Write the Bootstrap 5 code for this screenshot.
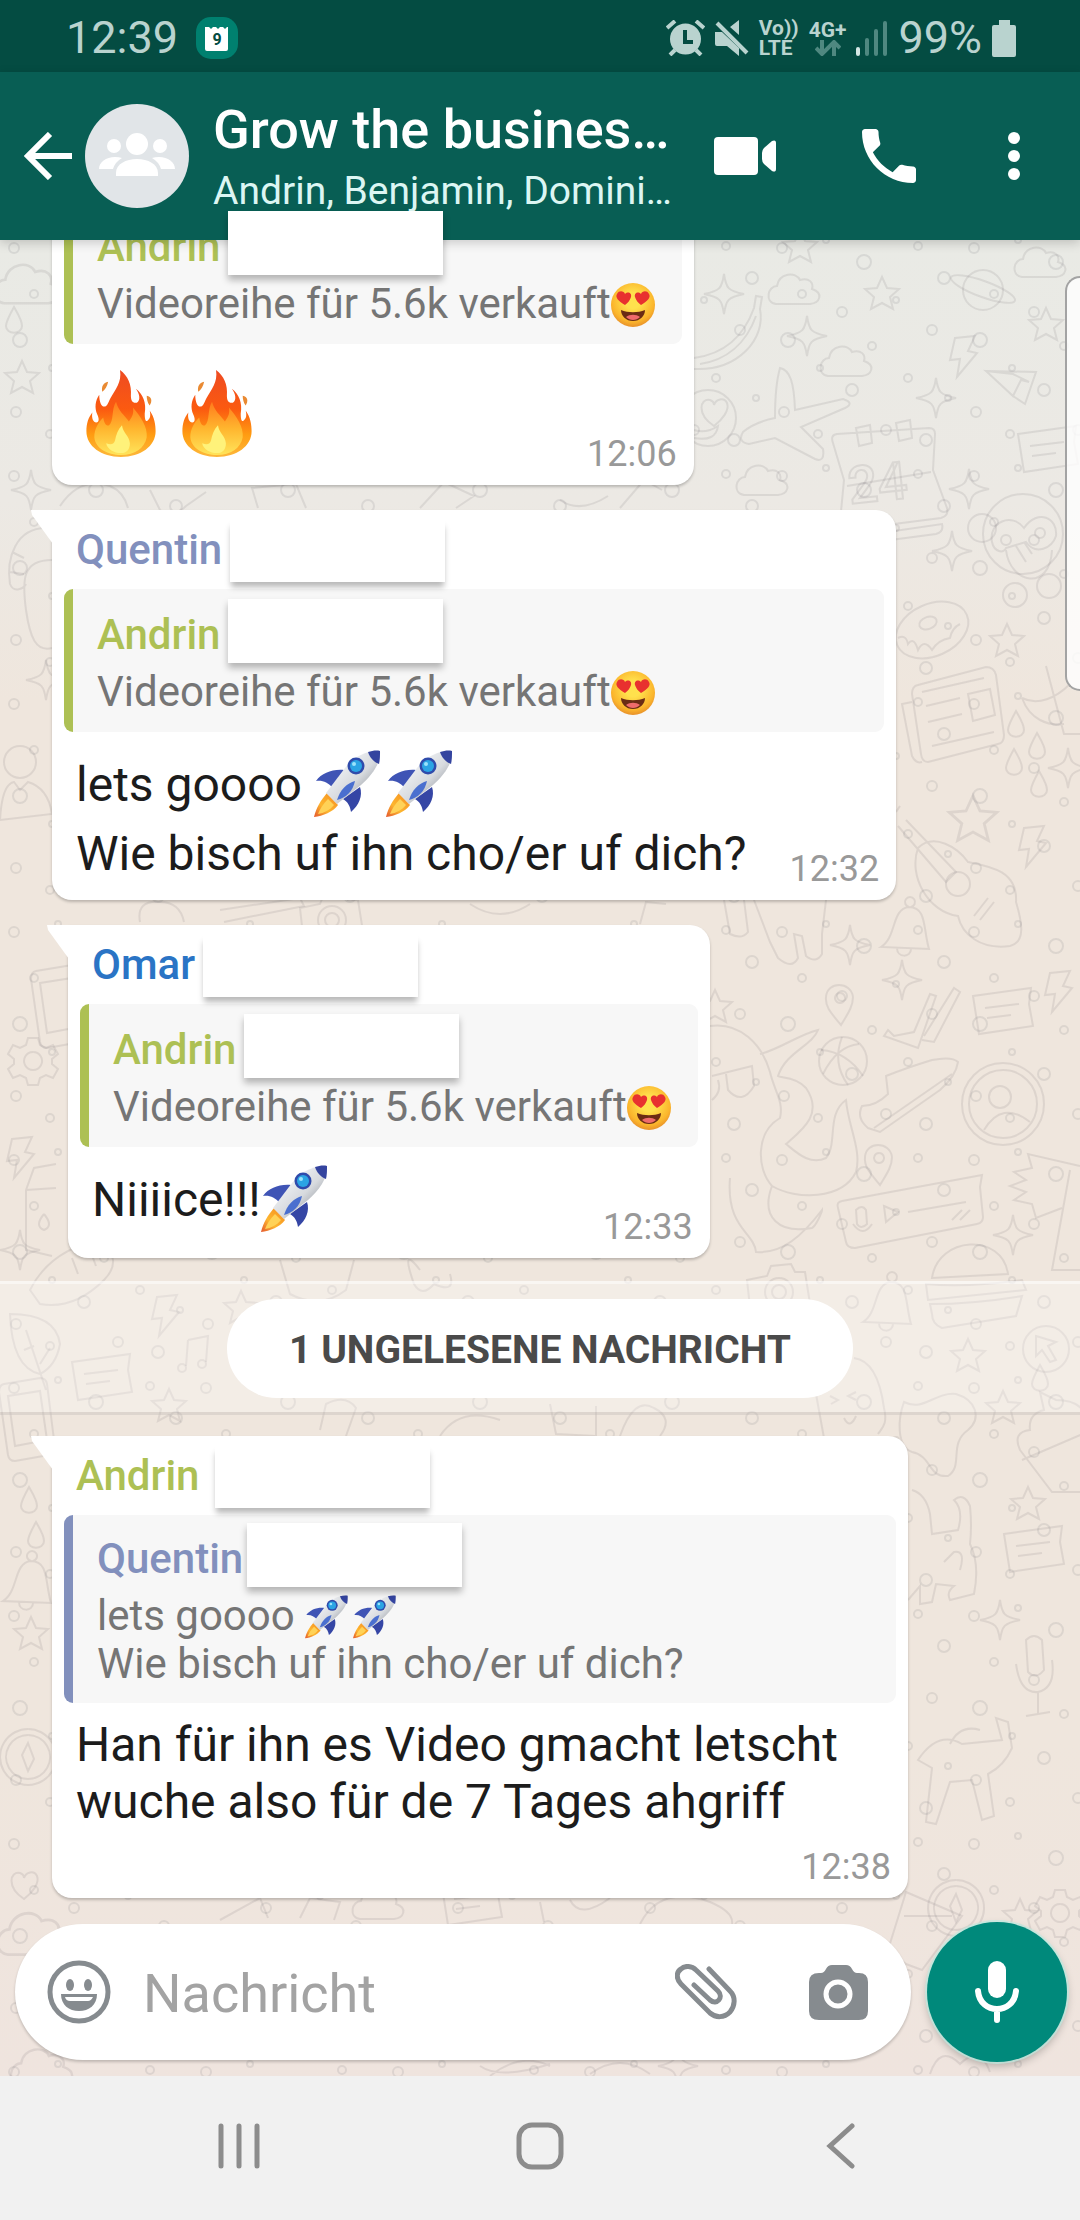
<!doctype html>
<html lang="de">
<head>
<meta charset="utf-8">
<meta name="viewport" content="width=device-width, initial-scale=1">
<title>Grow the business</title>
<link href="https://cdn.jsdelivr.net/npm/bootstrap@5.3.0/dist/css/bootstrap.min.css" rel="stylesheet">
<style>
  body { font-family: Roboto, "Liberation Sans", sans-serif; color: #1c1c1c; background: #f1f1f1; }
  button { border: 0; background: none; padding: 0; color: inherit; line-height: 0; }
  svg { flex: none; }

  /* status bar and header */
  .statusbar { background: #044c42; color: #b9d3cf; height: 72px; padding: 4px 64px 0 66px; gap: 10px; font-size: 45px; line-height: 54px; position: relative; z-index: 2; }
  .net-label { font-size: 21px; line-height: 20px; font-weight: 700; }
  .chat-header { background: #085e54; color: #fff; height: 168px; padding: 0 54px 0 24px; position: relative; z-index: 2; box-shadow: 0 3px 10px rgba(0,0,0,.18); }
  .avatar { margin-left: 13px; margin-right: 24px; }
  .chat-title { font-size: 54px; line-height: 64px; font-weight: 500; }
  .chat-members { font-size: 39px; line-height: 48px; margin-top: 5px; color: #dcf6f3; }
  .header-tools { gap: 86px; }

  /* conversation */
  .conversation { position: relative; background: linear-gradient(#e9eae5, #ece9e4 260px, #efe6dd 460px, #efe6dd 1500px, #efe4de); }
  .wallpaper { position: absolute; inset: 0; width: 100%; height: 100%; stroke: #6e6a70; stroke-opacity: .14; stroke-width: 2; fill: none; }
  .wall-dots { stroke: #6e6a70; stroke-opacity: .14; stroke-width: 2; fill: none; }
  .edge-panel { position: absolute; right: 0; top: 36px; width: 15px; height: 415px; background: rgba(255,255,255,.8); border: 2px solid #a3a3a3; border-right: 0; border-radius: 16px 0 0 16px; }
  .thread { position: relative; gap: 25px; margin-top: -51px; padding-left: 52px; }
  .bubble { position: relative; background: #fff; border-radius: 20px; padding: 16px 12px 12px; box-shadow: 0 2px 3px rgba(0,0,0,.22); white-space: nowrap; }
  .bubble-cut { padding-top: 12px; }
  .bubble-tail { border-top-left-radius: 0; }
  .bubble-tail::before { content: ""; position: absolute; left: -21px; top: 0; width: 22px; height: 34px; background: #fff; clip-path: polygon(0 0, 100% 0, 100% 100%, 1px 5px); }
  .bubble-in { margin-left: 16px; }
  .sender { font-size: 42px; line-height: 48px; font-weight: 500; position: relative; width: max-content; }
  .bubble > .sender { margin: 0 12px 15px; }
  .hidden-name { position: absolute; left: 100%; top: -12px; width: 215px; height: 64px; background: #fff; box-shadow: 0 5px 7px rgba(0,0,0,.28); z-index: 3; }
  .bubble > .sender .hidden-name { top: -6px; height: 62px; box-shadow: 0 6px 6px -1px rgba(0,0,0,.28); }
  .c-green { color: #adc054; } .c-violet { color: #8290bd; } .c-blue { color: #2a74c5; }
  .quoted { background: #f7f7f7; border-left: 9px solid; border-radius: 9px; padding: 22px 27px 16px 24px; }
  .quoted-long { padding-top: 20px; padding-bottom: 15px; }
  .quoted-text { font-size: 42px; line-height: 48px; color: #757575; margin-top: 9px; }
  .body-text { font-size: 48px; line-height: 69px; padding-top: 18px; }
  .body-dense { line-height: 57px; padding-top: 13px; padding-right: 58px; }
  .sent-at { font-size: 36px; line-height: 38px; color: #999; padding-right: 5px; }
  .body-text + .sent-at { padding-left: 43px; }
  .emoji-sm { width: 44px; height: 44px; vertical-align: -9px; }
  .emoji-md { width: 68px; height: 68px; vertical-align: -17px; }
  .emoji-row { padding: 26px 0 16px 22px; gap: 25px; }

  .unread { position: relative; height: 134px; margin-top: 23px; background: rgba(255,255,255,.28); border-top: 3px solid rgba(255,255,255,.5); border-bottom: 3px solid rgba(90,70,60,.14); }
  .unread-pill { background: #fff; color: #4a4a4a; font-size: 39px; line-height: 47px; font-weight: 700; padding: 28px 62px 24px; border-radius: 50px; }
  .thread-new { margin-top: 21px; }
  .thread-new .sent-at { padding-top: 18px; }

  /* composer */
  .composer { position: relative; padding: 24px 13px 14px 15px; gap: 16px; }
  .compose-pill { background: #fff; border-radius: 68px; height: 136px; padding: 0 43px 0 32px; box-shadow: 0 2px 3px rgba(0,0,0,.2); color: #868b8f; min-width: 0; }
  .compose-input { border: 0; outline: 0; width: 0; min-width: 0; font-size: 54px; line-height: 64px; margin-left: 32px; padding: 4px 0 0; background: none; }
  .compose-input::placeholder { color: #a3a3a3; opacity: 1; }
  .mic-btn { flex: none; width: 140px; height: 140px; background: #00897b; color: #fff; box-shadow: 0 0 0 2px rgba(190,235,225,.7), 0 4px 8px rgba(0,0,0,.25); }
  .softkeys { background: #f1f1f1; height: 144px; padding: 0 88px 4px; color: #8c8c8c; }
  .softkeys button { flex: 1 1 0; }
</style>
</head>
<body>

<!-- shared drawings -->
<svg width="0" height="0" class="position-absolute" aria-hidden="true">
  <defs>
    <linearGradient id="hull" x1="0" y1="0" x2="1" y2="1"><stop offset=".2" stop-color="#f3f5f8"/><stop offset=".55" stop-color="#d7dade"/><stop offset=".8" stop-color="#9b9fa6"/></linearGradient>
    <linearGradient id="exhaust" x1="1" y1="0" x2="0" y2="1"><stop offset="0" stop-color="#f58a1f"/><stop offset=".6" stop-color="#fdb62f"/><stop offset="1" stop-color="#e4572e"/></linearGradient>
    <linearGradient id="blaze" x1="0" y1="0" x2="0" y2="1"><stop offset="0" stop-color="#ee4b22"/><stop offset=".45" stop-color="#fb5a10"/><stop offset=".75" stop-color="#ff9d12"/><stop offset="1" stop-color="#fdb83c"/></linearGradient>
    <linearGradient id="ember" x1="0" y1="0" x2="0" y2="1"><stop offset="0" stop-color="#ff7a1c"/><stop offset=".5" stop-color="#ffb52e"/><stop offset="1" stop-color="#ffe45a"/></linearGradient>
    <radialGradient id="skin" cx=".5" cy=".4" r=".6"><stop offset=".3" stop-color="#ffe14d"/><stop offset=".8" stop-color="#fbb52c"/><stop offset="1" stop-color="#e8912a"/></radialGradient>
    <symbol id="rocket" viewBox="0 0 68 68">
      <path d="M30 20C18 19 8 23 2 31c7-1 12 2 16 6z" fill="#3f54b5"/>
      <path d="M46 37c3 9-1 18-9 25-1-6-3-10-8-13z" fill="#3546a5"/>
      <path d="M13 43C7 50 2 58 0 67c9-1 19-5 24-12z" fill="url(#exhaust)"/>
      <path d="M14 49c-5 5-8 10-10 15 6-1 12-4 16-9z" fill="#ffd257"/>
      <path d="M66 1C50 0 38 9 31 18L12 43l11 11 24-19C57 26 67 14 66 1z" fill="url(#hull)"/>
      <path d="M66 1c-4-1-8 0-12 1 2 6 6 10 11 12 1-4 1-9 1-13z" fill="#34449f"/>
      <circle cx="42" cy="16" r="8.500" fill="#2f4bab"/><circle cx="42" cy="16" r="6" fill="#2ba4e4"/><circle cx="40" cy="14" r="2" fill="#9be3fb"/>
      <path d="M41 31c-8 2-15 9-18 19 9-2 16-9 18-19z" fill="#4a6fcf"/>
    </symbol>
    <symbol id="flame" viewBox="0 0 71 88">
      <path d="M34 0c8 6 12 15 11 26 0 5 2 8 6 7 4-2 3-9-1-14 7 5 11 14 9 25 0 6 1 9 3 7 3-2 3-6 2-10 5 7 6 15 6 21 0 15-15 26-35 26S0 77 0 62c0-8 2-14 6-19-1 6 1 10 4 10s3-4 1-8c-3-7-2-14 2-20 0 7 2 12 5 12s4-4 6-8c5-9 12-16 10-29z" fill="url(#blaze)"/>
      <path d="M30 32c2 9 8 13 13 20 4-5 5-9 4-14 8 9 15 20 14 30-2 11-12 18-26 18S9 79 8 68c0-8 4-15 9-20 1 6 3 9 6 8 5-5 2-16 7-24z" fill="url(#ember)"/>
      <path d="M36 56c1 8 7 10 8 18 0 6-3 10-9 10-7 0-14-4-15-10 5 2 8 1 9-3 1-5 3-11 7-15z" fill="#fff27a"/>
      <path d="M22 12c-5 1-7 5-6 10 3-2 5-5 6-10zM61 26c5 1 6 5 3 10-2-3-3-6-3-10z" fill="#e98a33"/>
    </symbol>
    <symbol id="heart-eyes" viewBox="0 0 44 44">
      <circle cx="22" cy="22" r="22" fill="url(#skin)"/>
      <path d="M14 22C7 18 4 14 6 11c2-4 7-3 8 0 3-3 7-1 6 3-1 3-3 6-6 8zM30 22c-3-2-5-5-6-8-1-4 3-6 6-3 1-3 6-4 8 0 2 3-1 7-8 11z" fill="#e8312f"/>
      <path d="M10 27c7 3 17 3 24 0 0 6-5 11-12 11s-12-5-12-11z" fill="#6b2c14"/>
      <path d="M15 34c4-3 10-3 14 0-4 4-10 4-14 0z" fill="#ef6b6b"/>
    </symbol>

    <path id="d-star" d="M0-16 5-5 17-4 8 4l3 12L0 10l-11 6 3-12-9-8 12-1z"/>
    <path id="d-spark" d="M0-20C2-6 4-3 20 0 4 3 2 6 0 20-2 6-4 3-20 0-4-3-2-6 0-20z"/>
    <path id="d-bolt" d="M-8-18 12-20 5-5 14-3-6 21-3 3-13 4z"/>
    <path id="d-cloud" d="M-20 14c-12-2-8-18 1-18 2-13 19-15 23-6 9-3 14 3 12 9 12 4 8 14-2 15z"/>
    <path id="d-drop" d="M0-15c5 9 8 13 8 19 0 9-16 9-16 0C-8 0-5-6 0-15z"/>
    <path id="d-note" d="M-28-18 30-26 28-10 32 12-22 20zM-16-6 18-10M-14 4 10 1"/>
    <path id="d-bell" d="M-24 18C-8 8-14-20 4-22c18 0 14 22 20 42zM-8 19c0 10 14 10 14 1M4-22a5 5 0 1 1 2 0"/>
    <path id="d-pin" d="M2 22C-8 10-14 4-13-6-12-22 12-22 14-6 14 4 8 12 2 22zM1-10a5 5 0 1 0 .1 0"/>
    <path id="d-heart" d="M0 14C-18 2-14-14-4-12c3 1 4 3 4 5 2-6 10-8 13-2C16-2 8 8 0 14z"/>
    <path id="d-gear" d="M-5-22H5l2 7 6 3 7-3 5 9-6 5v5l6 5-5 9-7-3-6 3-2 7H-5l-2-7-6-3-7 3-5-9 6-5v-5l-6-5 5-9 7 3 6-3zM0-8a9 9 0 1 0 .1 0"/>
    <path id="d-compass" d="M0-28a28 28 0 1 0 .1 0M0-22a22 22 0 1 0 .1 0M0-14 6 2 0 14-6-2z"/>
    <path id="d-phone" d="M-16-36 20-42q6 0 7 6l8 64q0 6-6 7l-34 6q-6 0-7-6l-9-63q0-7 5-8zM-12-24 20-29 27 20-5 26z"/>
    <g id="d-camera"><path d="M-30-10-10-14-6-24 14-26 18-18 28-18 34 20-26 26z"/><circle cx="2" cy="2" r="14"/><circle cx="2" cy="2" r="7"/></g>
    <pattern id="bubbles" class="wall-dots" width="192" height="228" patternUnits="userSpaceOnUse">
      <circle cx="14" cy="20" r="5"/><circle cx="58" cy="12" r="3"/><circle cx="96" cy="34" r="7"/><circle cx="150" cy="18" r="4"/><circle cx="176" cy="50" r="6"/>
      <circle cx="34" cy="66" r="4"/><circle cx="74" cy="84" r="5"/><circle cx="128" cy="72" r="3"/><circle cx="20" cy="112" r="7"/><circle cx="104" cy="118" r="4"/>
      <circle cx="164" cy="102" r="5"/><circle cx="52" cy="140" r="3"/><circle cx="84" cy="162" r="6"/><circle cx="140" cy="150" r="4"/><circle cx="180" cy="170" r="3"/>
      <circle cx="16" cy="184" r="5"/><circle cx="50" cy="206" r="4"/><circle cx="118" cy="202" r="5"/><circle cx="158" cy="212" r="6"/>
    </pattern>
  </defs>
</svg>

<div class="d-flex flex-column min-vh-100">

  <div class="statusbar d-flex align-items-center">
    <span>12:39</span>
    <svg class="ms-2" width="42" height="42" viewBox="0 0 42 42"><rect width="42" height="42" rx="15" fill="#00806f"/><path d="M9 10h4l2 2 2-2h3l2 2 2-2h3l2 2 2-2h1v22q0 2-2 2H11q-2 0-2-2z" fill="#fff"/><text x="21" y="28" font-size="16" font-weight="700" text-anchor="middle" fill="#044c42">9</text></svg>
    <svg class="ms-auto" width="39" height="36" viewBox="0 0 39 36"><circle cx="19.500" cy="19" r="15.500" fill="currentColor"/><path d="M1 8l8-7M38 8l-8-7M4 35l5-5M35 35l-5-5" stroke="currentColor" stroke-width="4"/><path d="M19 10v12h8" stroke="#044c42" stroke-width="4" fill="none"/></svg>
    <svg width="34" height="36" viewBox="0 0 34 36" fill="currentColor"><path d="M0 12h7l17 16v8L12 26H2q-2 0-2-2zM24 0v15l-9-8z"/><path d="M2 3l30 30" stroke="currentColor" stroke-width="4"/></svg>
    <span class="net-label">Vo))<br>LTE</span>
    <span class="net-label d-flex flex-column align-items-center">4G+<svg width="26" height="16" viewBox="0 0 26 16" stroke="#4f8880" stroke-width="4" fill="none"><path d="M7 0v13M1 8l6 6 6-6M19 16V3M13 8l6-6 6 6"/></svg></span>
    <svg width="32" height="36" viewBox="0 0 32 36" stroke="#4f8880" stroke-width="4" stroke-linecap="round"><path d="M2 29v5" stroke="#d5e8e5"/><path d="M11 20v14M20 11v23M29 3v31"/></svg>
    <span>99%</span>
    <svg width="24" height="37" viewBox="0 0 24 37" fill="currentColor"><path d="M7 0h11v5h4q2 0 2 2v28q0 2-2 2H2q-2 0-2-2V7q0-2 2-2h5z"/></svg>
  </div>

  <header class="chat-header d-flex align-items-center">
    <button type="button" aria-label="Zurück"><svg width="48" height="48" viewBox="0 0 48 48" fill="none" stroke="#fff" stroke-width="6"><path d="M48 24H4M26 2 4 24l22 22"/></svg></button>
    <svg class="avatar" width="104" height="104" viewBox="0 0 104 104" fill="#fff"><circle cx="52" cy="52" r="52" fill="#e1e5e8"/><circle cx="52" cy="40" r="11"/><circle cx="29" cy="42" r="7"/><circle cx="75" cy="42" r="7"/><path d="M31 72v-3c0-9 10-14 21-14s21 5 21 14v3zM14 65c0-7 7-12 16-12q4 0 7 1-7 4-9 11zM90 65c0-7-7-12-16-12q-4 0-7 1 7 4 9 11z"/></svg>
    <div class="flex-grow-1 text-nowrap overflow-hidden">
      <div class="chat-title">Grow the busines…</div>
      <div class="chat-members">Andrin, Benjamin, Domini…</div>
    </div>
    <div class="header-tools d-flex align-items-center">
      <button type="button" aria-label="Videoanruf"><svg width="62" height="38" viewBox="0 0 62 38" fill="#fff"><rect width="44" height="38" rx="4"/><path d="M62 6v26c0 3-2 3-4 2l-8-7q-2-2-2-5v-6q0-3 2-5l8-7c2-1 4-1 4 2z"/></svg></button>
      <button type="button" aria-label="Anruf"><svg width="54" height="54" viewBox="3 3 18 18" fill="#fff"><path d="M6.620 10.790c1.440 2.830 3.760 5.140 6.590 6.590l2.200-2.200c.270-.270.670-.360 1.020-.240 1.120.370 2.330.570 3.570.570.550 0 1 .450 1 1V20c0 .550-.450 1-1 1-9.390 0-17-7.610-17-17 0-.550.450-1 1-1h3.500c.550 0 1 .450 1 1 0 1.250.200 2.450.570 3.570.110.350.030.740-.250 1.020l-2.200 2.200z"/></svg></button>
      <button type="button" aria-label="Weitere Optionen"><svg width="24" height="50" viewBox="0 0 24 50" fill="#fff"><circle cx="12" cy="7" r="6"/><circle cx="12" cy="25" r="6"/><circle cx="12" cy="43" r="6"/></svg></button>
    </div>
  </header>

  <main class="conversation flex-grow-1 d-flex flex-column">
    <svg class="wallpaper" viewBox="0 240 1080 1836" preserveAspectRatio="xMidYMin slice" aria-hidden="true">
      <rect y="240" width="1080" height="1836" fill="url(#bubbles)" stroke="none"/>
      <g>
        <use href="#d-star" x="882" y="293"/><use href="#d-star" x="1046" y="324"/><use href="#d-star" x="1007" y="640"/><use href="#d-star" transform="translate(973 818) scale(1.400)"/>
        <use href="#d-star" x="22" y="377"/><use href="#d-star" x="800" y="246"/><use href="#d-star" x="968" y="1355"/><use href="#d-star" x="1003" y="1407"/><use href="#d-star" x="1028" y="1503"/>
        <use href="#d-star" x="241" y="1307"/><use href="#d-star" x="169" y="1405"/><use href="#d-star" x="31" y="1633"/><use href="#d-star" x="1020" y="1915"/><use href="#d-star" x="715" y="1006"/>
        <use href="#d-spark" x="724" y="294"/><use href="#d-spark" x="807" y="336"/><use href="#d-spark" x="936" y="398"/><use href="#d-spark" x="969" y="489"/><use href="#d-spark" x="952" y="551"/><use href="#d-spark" x="1068" y="768"/>
        <use href="#d-spark" x="31" y="490"/><use href="#d-spark" x="46" y="680"/><use href="#d-spark" x="850" y="945"/><use href="#d-spark" x="902" y="980"/><use href="#d-spark" x="1013" y="1235"/><use href="#d-spark" x="20" y="1250"/><use href="#d-spark" x="678" y="2066"/><use href="#d-spark" x="1000" y="1620"/>
        <use href="#d-cloud" x="796" y="290"/><use href="#d-cloud" x="848" y="362"/><use href="#d-cloud" x="764" y="481"/><use href="#d-cloud" x="1042" y="263"/><use href="#d-cloud" transform="translate(30 285) scale(1.300)"/><use href="#d-cloud" transform="translate(36 1935) scale(1.400)"/><use href="#d-cloud" transform="translate(44 2068) scale(1.200)"/><use href="#d-cloud" x="380" y="1905"/>
        <use href="#d-bolt" x="963" y="356"/><use href="#d-bolt" x="1032" y="846"/><use href="#d-bolt" x="1058" y="991"/><use href="#d-bolt" x="20" y="1157"/><use href="#d-bolt" x="165" y="1315"/>
        <use href="#d-drop" x="1016" y="726"/><use href="#d-drop" x="1037" y="748"/><use href="#d-drop" x="1014" y="764"/><use href="#d-drop" x="1039" y="786"/><use href="#d-drop" x="29" y="1502"/><use href="#d-drop" x="36" y="1537"/><use href="#d-drop" x="14" y="322"/><use href="#d-drop" x="1040" y="1380"/>
        <use href="#d-note" x="1001" y="1014"/><use href="#d-note" x="1032" y="1552"/><use href="#d-note" x="100" y="1380"/><use href="#d-note" x="1046" y="452"/><use href="#d-note" x="470" y="1905"/>
        <use href="#d-bell" x="905" y="929"/><use href="#d-bell" x="887" y="1304"/><use href="#d-bell" x="27" y="1583"/>
        <use href="#d-pin" x="839" y="1003"/><use href="#d-pin" x="878" y="1163"/>
        <use href="#d-heart" x="24" y="1885"/><use href="#d-heart" x="714" y="412"/>
        <use href="#d-gear" x="33" y="1060"/><use href="#d-gear" x="1060" y="1912"/>
        <use href="#d-compass" x="28" y="1757"/><use href="#d-compass" x="956" y="1908"/>
        <use href="#d-phone" x="52" y="1007"/><use href="#d-phone" x="20" y="1420"/>
        <use href="#d-camera" x="777" y="1290"/><use href="#d-camera" x="330" y="918"/>
      </g>
      <!-- planet, banana, smiley, aeroplane, paper plane -->
      <circle cx="983" cy="290" r="20"/><ellipse cx="983" cy="289" rx="34" ry="8" transform="rotate(20 983 289)"/>
      <path d="M694 358c30-4 50-22 60-50l2-12 6 1-2 12c6 30-22 62-66 60M700 364c26-4 46-20 56-48"/>
      <circle cx="708" cy="418" r="28"/><path d="M694 430q12 4 24-4-2 16-24 12"/>
      <path d="M775 418c0-20 1-36 5-50 10 2 14 14 15 42l48-11q12 4 2 9l-44 19 22 22q2 14-8 10l-40-21-26 6q-12-2-6-12 12-10 32-14z"/>
      <path d="M986 371l50 1-11 32-12-8M986 371l27 25 8-16 8 2-16-8z"/>
      <!-- calendar -->
      <path d="M833 443q-3-8 4-9l92-6q6 0 6 6l-2 36 14 38q2 8-6 10l-94 12q-8 0-7-8l4-42zM847 486l84-14M856 428l14-3 2 18-13 3zM896 423l14-3 2 18-13 3zM860 536l82-12q2 8-6 10l-76 10"/>
      <text x="850" y="504" font-size="52" font-weight="500" transform="rotate(-6 850 504)">24</text>
      <!-- monkey -->
      <circle cx="1023" cy="534" r="40"/><circle cx="982" cy="528" r="14"/><path d="M1024 528c-12-16-36-6-32 14 2 10 12 12 14 6l20-6c10 14 26 6 30-6 2-18-18-28-32-8zM1006 550c4 34 44 42 46 0M1016 546l10 16M1024 542l8 12"/><circle cx="1006" cy="540" r="5"/><circle cx="1040" cy="533" r="5"/><circle cx="1015" cy="595" r="12"/><circle cx="1049" cy="586" r="12"/>
      <!-- doughnut, newspaper, pepper -->
      <ellipse cx="932" cy="630" rx="38" ry="26" transform="rotate(-24 932 630)"/><ellipse cx="928" cy="623" rx="9" ry="6" transform="rotate(-20 928 623)"/><path d="M898 638q8-4 10 6 6-8 10 6 6-12 14 0 6-10 18-12 2-10 10-14"/>
      <path d="M912 694q0-8 6-9l68-18q8 0 10 8l8 60q0 8-6 9l-70 18q-6 0-7-8zM912 702l-10 2 10 52q4 8 10 6M922 692l62-14M926 706l34-8M928 722l34-8M932 746l62-14M968 694l22-5 5 26-22 6z"/>
      <path d="M1022 698c16 8 34 0 48-14M1022 698c8 22 26 28 42 26M1046 666l18 68h30"/>
      <!-- guitar -->
      <path d="M896 812l4-6M898 826l48 56 10-10-50-52M918 848c16-16 40 0 50 14 20 4 50 8 48 40 6 20 10 40-6 44-30 4-48-12-52-30-30-4-50-40-40-68z"/><circle cx="958" cy="884" r="12"/><path d="M974 916l14-18M980 920l14-18"/>
      <!-- cat legs, octopus, glasses -->
      <path d="M724 900l6 34q12 6 18-2l-4-32M754 900l16 42 8 16q14 12 20 0l-4-24 8 2 4 20q10 8 16-2v-20l4-34"/>
      <path d="M710 1026c30-4 52 18 60 46 4 18 14 30 10 46-24 14-24 50-8 68 24 14 70 14 84-14 6-22-8-46-10-72-20 14-8 44-20 58-16 8-30-6-40-14 16-14 38-30 20-56-10-12-26-10-28-12 8-24 34-30 40-46-18 4-40 20-58 24M772 1186c-12 32 8 48 40 42 4-2 10-16 10-18-20 26-40 44-66 42-2-20-30-24-26-74"/>
      <path d="M712 1076l40-10 2 20q-12 20-26 4l-2-16M712 1100q10-8 6-20"/>
      <!-- basketball, double tick, shoe, contact -->
      <circle cx="843" cy="1061" r="24"/><path d="M821 1050q26 2 42 26M823 1074q14-28 36-30M842 1037q-10 26 6 48"/>
      <path d="M888 1030l6 6 20-4 16-38 6 2-18 52-34-12zM924 1036l30-48 6 4-26 50-12-2"/>
      <path d="M862 1106q14 0 26-12l-2-18q20-8 46-16 20-4 26 2-2 14-18 28l-60 42-12-4q-12-10-6-22zM874 1128l78-54"/>
      <circle cx="1003" cy="1104" r="41"/><circle cx="1003" cy="1104" r="34"/><circle cx="1000" cy="1097" r="11"/><path d="M984 1130q18-30 46-8"/>
      <!-- voice note, hand, jar -->
      <path d="M838 1208q-2-6 4-7l140-26-2 12 3 30q0 6-6 7l-122 24q-8 0-9-6zM856 1210q6-6 10 0l1 14q-6 6-10 0zM853 1224q10 14 19 0M884 1206l14 6-12 10zM908 1212l58-10M952 1220l10-10M960 1220l10-10"/>
      <path d="M1080 1166l-52-12 4 14-18 4 12 8-16 6 16 6-12 8 18 4 4 14 26-10M1070 1170l-18 100h30"/>
      <!-- burger, dial, ice cream -->
      <path d="M932 1278c6-42 70-46 76-4zM926 1284q40 4 96-4l4 10-98 10zM930 1304q44 0 92-8l-6 20-74 12q-10-4-10-14z"/>
      <circle cx="1046" cy="1349" r="23"/><path d="M1036 1336l20 6-8 4 8 14-6 2-8-12-6 6z"/>
      <path d="M1020 1450q-8-18 10-20-2-16 14-20l-4-18 16 8q24 0 30 16M1020 1450l32 42h30M1022 1460l70-30"/>
      <!-- tooth, mahjong face, cat -->
      <path d="M904 1402c20 10 30-10 52-8 20 6 26 24 12 36-20 14-4 36-20 46-20 2-16-20-36-24-16-6-14-34-8-50z"/>
      <path d="M816 1394l8 44M854 1358c16 2 26 20 30 50 4 16-2 20-6 26M830 1396l8 4-7 4M856 1392l-8 4 8 4M844 1418q6 12 12-2"/>
      <path d="M912 1490q14 4 18 24l2 20 26-4q6-20-4-30 10-8 16 6 2 20 0 38 10 20 4 50l-24 6q-4-8 4-14l-18-2-4 18-12 2v-18l-12 14M960 1570q6-20-6-18l-10 10"/>
      <!-- microphone, horse -->
      <path d="M1026 1640q8-8 16 0l2 30q-8 10-16 2zM1016 1664q4 30 22 28 18-4 14-32M1038 1692v22M1026 1716l24-4"/>
      <path d="M918 1760q20-30 44-16l40-4-6-22 12 4 4 26q-8 18-24 26l6 42-12 4-10-40-22 2-14 42-10-2 6-54zM950 1744q10-20 30-14"/>
      <!-- cocktail -->
      <path d="M906 1892l56 24-40 54-16-6-18-14zM904 1916h48"/>
      <!-- left edge: snake, person, carton, leaf, bread -->
      <path d="M46 528c-30 0-40 30-36 56 4 10 14 4 16 0M52 560c-30 0-30 20-26 50 4 28 10 42 26 38M12 552l12 6M10 572l14 2"/>
      <circle cx="20" cy="762" r="16"/><path d="M0 820q2-36 14-38l6 8 8-8q20 6 24 32z"/>
      <path d="M26 1190l8-22 22-4M26 1190v60l26 6M26 1190l30-2M44 1214q-10 12 0 16 10-4 0-16"/>
      <path d="M10 1314q46 0 50 30-4 22-20 30-28-6-30-60zM26 1330l20 60M24 1350l10-4M40 1364l10-16"/>
      <path d="M30 1290q20-40 70-50 24 20 4 40-30 30-64 24zM72 1258l6 16M90 1250l6 16"/>
      <path d="M280 1260l10 34q30 16 56-4l8-30M420 1270q-20-26-6 14 8 14 20 0 22 10 16-10"/>
      <path d="M188 1340l20-4-2 26M188 1340l-2 26"/><circle cx="182" cy="1368" r="4"/><circle cx="202" cy="1364" r="4"/>
      <!-- strips between the bubbles -->
      <path d="M60 506q20-30 50-20 14 6 18 22M150 490l10 20q12 10 26-4l20-14M258 508l-6-20 44-4 10 24M420 508l24-26 30 14-18 12M560 500q20 14 48-4M620 508l24-28 18 10"/>
      <path d="M140 922q-4-22 20-20 20 0 24 20M220 910l80-12 4 8-80 16M640 924l6-22 20 2M470 904q30 20 60 0"/>
      <path d="M320 1430l6-26q20-10 30 4l-10 28M440 1436q20-30 60-16M550 1404l6 30 40 2v-30M620 1436q14-40 34-28 20 10 6 28"/>
      <path d="M220 1920l40-22 8 20M300 1918l10-20 30 4-6 18M540 1902l4 20M570 1900q10 20 40-2M640 1924q20-40 70-22 24 10 22 22M480 2066q20 14 70-2M490 2076q30-24 60-10M590 2074q30-22 60 0M930 2074q10-30 30-10 20-20 30 8"/>
    </svg>
    <div class="edge-panel"></div>

    <div class="thread d-flex flex-column align-items-start">
      <article class="bubble bubble-cut">
        <div class="quoted" style="border-color:#adc054">
          <div class="sender c-green">Andrin<span class="hidden-name ms-2"></span></div>
          <div class="quoted-text">Videoreihe für 5.6k verkauft<svg class="emoji-sm" role="img" aria-label="😍"><use href="#heart-eyes"/></svg></div>
        </div>
        <div class="d-flex align-items-end justify-content-between">
          <div class="emoji-row d-flex"><svg width="71" height="87" role="img" aria-label="🔥"><use href="#flame"/></svg><svg width="71" height="87" role="img" aria-label="🔥"><use href="#flame"/></svg></div>
          <time class="sent-at">12:06</time>
        </div>
      </article>

      <article class="bubble bubble-tail">
        <div class="sender c-violet">Quentin<span class="hidden-name ms-2"></span></div>
        <div class="quoted" style="border-color:#adc054">
          <div class="sender c-green">Andrin<span class="hidden-name ms-2"></span></div>
          <div class="quoted-text">Videoreihe für 5.6k verkauft<svg class="emoji-sm" role="img" aria-label="😍"><use href="#heart-eyes"/></svg></div>
        </div>
        <div class="d-flex align-items-end justify-content-between ps-2 ms-1">
          <div class="body-text">lets goooo <svg class="emoji-md" role="img" aria-label="🚀"><use href="#rocket"/></svg><svg class="emoji-md ms-1" role="img" aria-label="🚀"><use href="#rocket"/></svg><br>Wie bisch uf ihn cho/er uf dich?</div>
          <time class="sent-at">12:32</time>
        </div>
      </article>

      <article class="bubble bubble-tail bubble-in">
        <div class="sender c-blue">Omar<span class="hidden-name ms-2"></span></div>
        <div class="quoted" style="border-color:#adc054">
          <div class="sender c-green">Andrin<span class="hidden-name ms-2"></span></div>
          <div class="quoted-text">Videoreihe für 5.6k verkauft<svg class="emoji-sm" role="img" aria-label="😍"><use href="#heart-eyes"/></svg></div>
        </div>
        <div class="d-flex align-items-end justify-content-between ps-2 ms-1">
          <div class="body-text pb-2 mb-1">Niiiice!!!<svg class="emoji-md" role="img" aria-label="🚀"><use href="#rocket"/></svg></div>
          <time class="sent-at">12:33</time>
        </div>
      </article>
    </div>

    <div class="unread d-flex align-items-center justify-content-center">
      <div class="unread-pill">1 UNGELESENE NACHRICHT</div>
    </div>

    <div class="thread thread-new d-flex flex-column align-items-start">
      <article class="bubble bubble-tail">
        <div class="sender c-green">Andrin<span class="hidden-name ms-3"></span></div>
        <div class="quoted quoted-long" style="border-color:#8290bd">
          <div class="sender c-violet">Quentin<span class="hidden-name ms-1"></span></div>
          <div class="quoted-text">lets goooo <svg class="emoji-sm" role="img" aria-label="🚀"><use href="#rocket"/></svg><svg class="emoji-sm ms-1" role="img" aria-label="🚀"><use href="#rocket"/></svg><br>Wie bisch uf ihn cho/er uf dich?</div>
        </div>
        <div class="ps-2 ms-1">
          <div class="body-text body-dense">Han für ihn es Video gmacht letscht<br>wuche also für de 7 Tages ahgriff</div>
          <time class="sent-at d-block text-end">12:38</time>
        </div>
      </article>
    </div>

    <form class="composer d-flex align-items-center mt-auto">
      <div class="compose-pill d-flex align-items-center flex-grow-1">
        <button type="button" aria-label="Emoji"><svg width="64" height="64" viewBox="0 0 64 64"><circle cx="32" cy="32" r="29" fill="none" stroke="currentColor" stroke-width="5"/><ellipse cx="23" cy="25" rx="4" ry="6" fill="currentColor"/><ellipse cx="41" cy="25" rx="4" ry="6" fill="currentColor"/><path d="M14 34h36c0 11-8 17-18 17s-18-6-18-17z" fill="currentColor"/><path d="M18 37h28q-2 4-5 4H23q-4 0-5-4z" fill="#fff"/></svg></button>
        <input class="compose-input flex-grow-1" type="text" placeholder="Nachricht" aria-label="Nachricht">
        <button type="button" aria-label="Anhängen"><svg width="62" height="57" viewBox="0 0 62 57" fill="none" stroke="currentColor" stroke-width="5" stroke-linecap="round"><path d="M34 5l21 22c6 6 5 15 0 21-6 6-14 6-20 1L6 20C1 15 1 8 6 5c4-4 11-3 15 1l22 21c6 6-1 15-8 9L19 21"/></svg></button>
        <button type="button" class="ms-5 ps-4" aria-label="Kamera"><svg width="59" height="55" viewBox="0 0 59 55" fill="currentColor"><path d="M10 8h2q3 0 5-4 2-4 6-4h14q4 0 6 4t5 4h2q9 0 9 9v29q0 9-9 9H10q-10 0-10-9V17q0-9 10-9z"/><circle cx="29" cy="29" r="12" fill="none" stroke="#fff" stroke-width="5"/></svg></button>
      </div>
      <button type="button" class="mic-btn rounded-circle" aria-label="Sprachnachricht"><svg width="44" height="62" viewBox="0 0 44 62" fill="none" stroke="currentColor" stroke-width="6" stroke-linecap="round"><rect x="13" y="0" width="18" height="37" rx="9" fill="currentColor" stroke="none"/><path d="M3 30c2 24 36 24 38 0M22 48v11"/></svg></button>
    </form>
  </main>

  <nav class="softkeys d-flex align-items-center" aria-label="System">
    <button type="button" aria-label="Letzte Apps"><svg width="44" height="46" viewBox="0 0 44 46" stroke="currentColor" stroke-width="5" stroke-linecap="round"><path d="M4 3v40M22 3v40M40 3v40"/></svg></button>
    <button type="button" aria-label="Startseite"><svg width="48" height="48" viewBox="0 0 48 48" fill="none" stroke="currentColor" stroke-width="5"><rect x="3" y="3" width="42" height="42" rx="13"/></svg></button>
    <button type="button" aria-label="Zurück"><svg width="30" height="46" viewBox="0 0 30 46" fill="none" stroke="currentColor" stroke-width="5" stroke-linecap="round"><path d="M26 3 4 23l22 20"/></svg></button>
  </nav>
</div>
<script src="https://cdn.jsdelivr.net/npm/bootstrap@5.3.0/dist/js/bootstrap.bundle.min.js"></script>
</body>
</html>
